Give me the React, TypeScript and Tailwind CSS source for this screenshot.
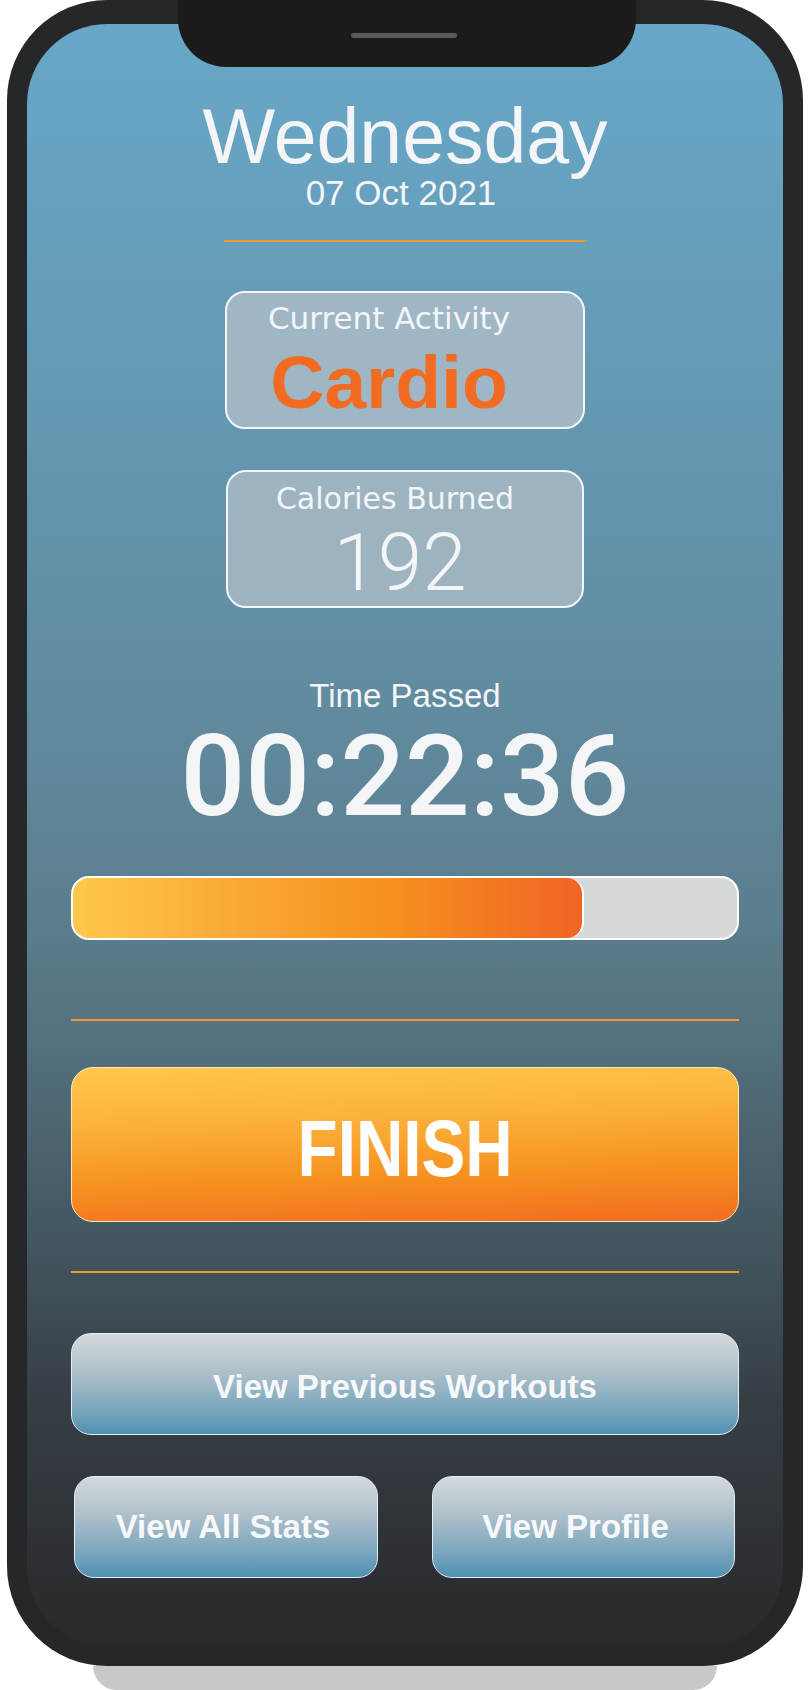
const sans = "font-['Liberation_Sans',Arial,sans-serif]";
const wide = "font-['DejaVu_Sans',Verdana,sans-serif]";

function NavButton({ label, className = "" }: { label: string; className?: string }) {
  return (
    <button
      className={`h-[102px] rounded-[20px] border-[1.5px] border-[#e4edf2] bg-[linear-gradient(180deg,#d5d9dc_0%,#abbec9_40%,#7ba6bd_75%,#5090b1_100%)] text-[33px] leading-[40px] font-bold text-[#f6f8fa] ${sans} ${className}`}
    >
      {label}
    </button>
  );
}

export default function App() {
  return (
    <div className="relative w-[809px] h-[1690px] bg-white overflow-hidden">
      {/* phone body */}
      <div className="relative ml-[7px] w-[796px] h-[1666px] rounded-[100px] bg-[#262729] pt-[24px] px-[20px]">
        {/* screen */}
        <div className="h-[1623px] rounded-[80px] bg-[linear-gradient(180deg,#68a7c8_0%,#6499b3_23%,#618b9f_42%,#5c7e8e_55%,#53707d_63%,#435660_75%,#363e44_85%,#28292b_100%)] flex flex-col items-center px-[44px] pt-[75px] text-[#f3f5f7]">
          <div className={`${sans} text-[77px] leading-[74px]`}>Wednesday</div>
          <div className={`${sans} text-[35px] leading-[40px] pr-[8px]`}>07 Oct 2021</div>

          <div className="mt-[27px] w-[362px] h-[2px] bg-[#ee9a30]" />

          {/* current activity */}
          <div className="mt-[49px] w-[360px] h-[138px] rounded-[20px] border-2 border-[#f4f7f9] bg-[#9fb7c4] flex flex-col items-center pt-[7px] pr-[32px]">
            <div className={`${wide} text-[31px] leading-[36px]`}>Current Activity</div>
            <div className={`${sans} mt-[6px] text-[75px] leading-[80px] font-bold text-[#f26b22]`}>Cardio</div>
          </div>

          {/* calories */}
          <div className="mt-[41px] w-[358px] h-[138px] rounded-[20px] border-2 border-[#f4f7f9] bg-[#9db4c0] flex flex-col items-center pt-[9px] pr-[20px]">
            <div className={`${wide} text-[30px] leading-[36px]`}>Calories Burned</div>
            <div className="mt-[6px] font-['Roboto',sans-serif] font-light text-[80px] leading-[80px] pl-[10px]">192</div>
          </div>

          <div className={`${sans} mt-[68px] text-[33px] leading-[40px]`}>Time Passed</div>
          <div className="mt-[4px] font-['Roboto',sans-serif] font-medium text-[114px] leading-[112px]">00:22:36</div>

          {/* progress */}
          <div className="mt-[44px] w-full h-[64px] rounded-[18px] border-2 border-white bg-[#d7d9d9] overflow-hidden">
            <div className="h-full w-[77%] rounded-[16px] border-r-2 border-white bg-[linear-gradient(90deg,#ffc84d_0%,#f9a633_35%,#f6901f_62%,#f06424_100%)]" />
          </div>

          <div className="mt-[79px] w-full h-[2px] bg-[#ee9a30]" />

          <button className="mt-[46px] w-full h-[155px] rounded-[22px] border-[1.5px] border-[#fde8c2] bg-[linear-gradient(178deg,#ffc94c_0%,#fbb03b_35%,#f6911f_68%,#f26c22_100%)] flex items-center justify-center pt-[8px]">
            <span className={`${sans} inline-block scale-x-[0.82] font-bold text-[80px] leading-[80px] text-white`}>FINISH</span>
          </button>

          <div className="mt-[49px] w-full h-[2px] bg-[#ee9a30]" />

          <NavButton label="View Previous Workouts" className="mt-[60px] w-full pt-[5px]" />

          <div className="mt-[41px] w-full px-[3px] flex gap-[54px]">
            <NavButton label="View All Stats" className="w-[304px] pr-[6px]" />
            <NavButton label="View Profile" className="w-[303px] pr-[16px]" />
          </div>
        </div>

        {/* notch */}
        <div className="absolute top-0 left-[171px] w-[458px] h-[67px] rounded-b-[48px] bg-[#1b1b1b]">
          <div className="absolute top-[33px] left-[173px] w-[106px] h-[5px] rounded-sm bg-[#58595b]" />
        </div>
      </div>
      <div className="ml-[93px] w-[624px] h-[24px] rounded-b-[40px] bg-[#c7c8ca]" />
    </div>
  );
}
